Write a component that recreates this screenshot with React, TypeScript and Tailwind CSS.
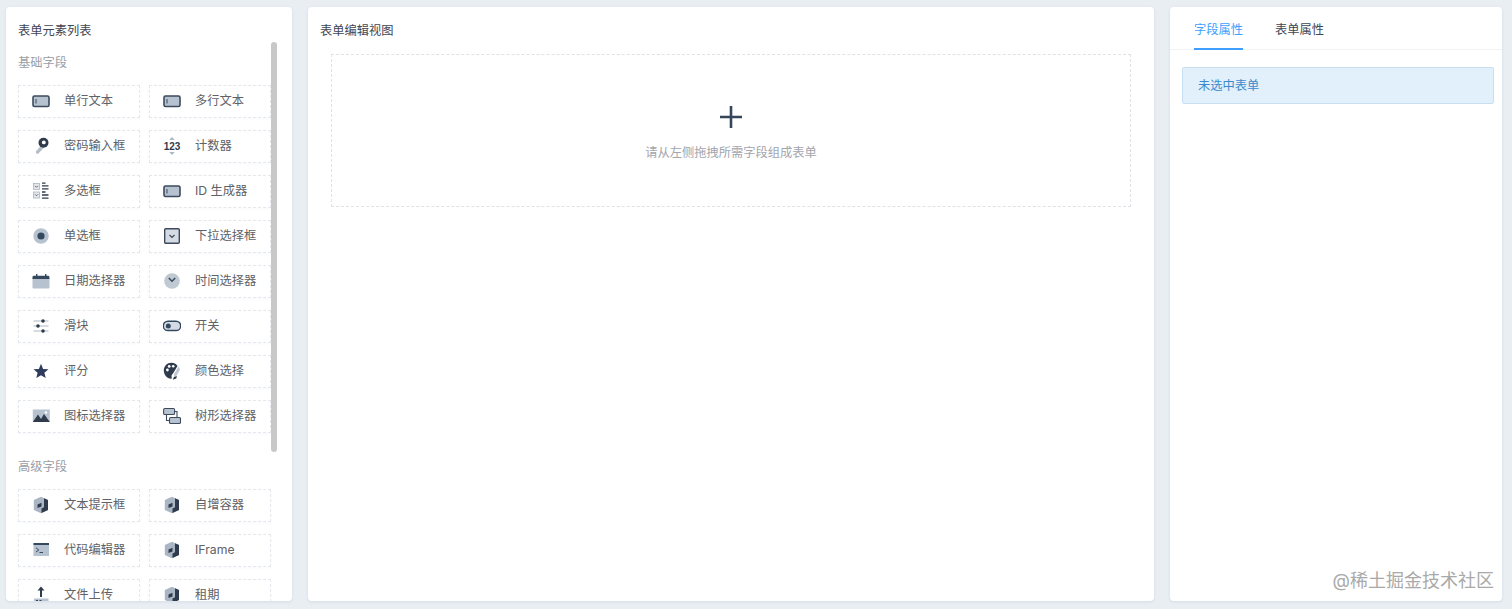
import React from "react";

const D = "#3d4a5c";
const L = "#b7c2d0";

const Svg = ({ children }: { children: React.ReactNode }) => (
  <svg viewBox="0 0 18 18" className="w-[18px] h-[18px] shrink-0">{children}</svg>
);

const InputIcon = () => (
  <Svg>
    <rect x="1" y="4" width="16" height="10.5" rx="1.5" fill={L} stroke={D} strokeWidth="1.6" />
    <rect x="3.5" y="7" width="1" height="4.5" fill={D} />
  </Svg>
);
const KeyIcon = () => (
  <Svg>
    <path d="M9.5 8 L3.8 14.5 L4.5 17 L6.5 16.5 L12 10.5" fill="#b4bdc8" />
    <circle cx="11.5" cy="5.8" r="5" fill="#2f3b4c" />
    <circle cx="11.8" cy="5.4" r="1.9" fill="#fff" />
  </Svg>
);
const CounterIcon = () => (
  <Svg>
    <path d="M9 0 L11.8 3 H6.2 Z M9 18 L11.8 15 H6.2 Z" fill="#aeb8c4" />
    <text x="9" y="12.8" textAnchor="middle" fontSize="10" fontWeight="700" fill="#2f3b4c" fontFamily="'Liberation Sans', sans-serif">123</text>
  </Svg>
);
const CheckListIcon = () => (
  <Svg>
    <rect x="1.5" y="1.5" width="6" height="6" fill="#e4e8ed" stroke="#aab4c0" strokeWidth="0.8" />
    <rect x="1.5" y="10" width="6" height="6" fill="#e4e8ed" stroke="#aab4c0" strokeWidth="0.8" />
    <path d="M3 3.8 L4.5 5.3 L6 3.8 M3 12.3 L4.5 13.8 L6 12.3" stroke={D} strokeWidth="0.8" fill="none" />
    <path d="M10 1.2h3.5M10 3.9h6.5M10 6.8h6.5M10 10h3.5M10 13h6.5M10 16.2h6.5" stroke="#2f3b4c" strokeWidth="1.3" />
  </Svg>
);
const RadioIcon = () => (
  <Svg>
    <circle cx="9" cy="9" r="7.7" fill={L} />
    <circle cx="9" cy="9" r="3.6" fill="#34495e" />
  </Svg>
);
const SelectIcon = () => (
  <Svg>
    <rect x="1.7" y="1.7" width="14.6" height="14.6" rx="1" fill="#d4dbe4" stroke={D} strokeWidth="1.4" />
    <path d="M6.5 8 L9 10.5 L11.5 8" stroke={D} strokeWidth="1.2" fill="none" />
  </Svg>
);
const DateIcon = () => (
  <Svg>
    <rect x="0.5" y="5" width="17" height="11.5" rx="1" fill={L} />
    <path d="M0.5 5.2 a1.4 1.4 0 0 1 1.4-1.4 H16 a1.4 1.4 0 0 1 1.4 1.4 V7 H0.5 Z" fill="#34495e" />
    <rect x="4" y="2" width="1.4" height="3" fill="#34495e" />
    <rect x="13" y="2" width="1.4" height="3" fill="#34495e" />
  </Svg>
);
const TimeIcon = () => (
  <Svg>
    <circle cx="9" cy="9" r="7.8" fill="#c0c8d1" />
    <path d="M5.8 6 L9 9.2 L12.2 6" stroke="#34495e" strokeWidth="1.5" fill="none" />
  </Svg>
);
const SliderIcon = () => (
  <Svg>
    <path d="M1.5 4h15M1.5 9h15M1.5 14h15" stroke="#aeb8c4" strokeWidth="1" />
    <circle cx="11" cy="4" r="1.8" fill="#2f3b4c" />
    <circle cx="6" cy="9" r="1.8" fill="#2f3b4c" />
    <circle cx="11" cy="14" r="1.8" fill="#2f3b4c" />
  </Svg>
);
const SwitchIcon = () => (
  <Svg>
    <rect x="0.3" y="4.2" width="17.4" height="9.4" rx="4.7" fill="#d4dbe4" stroke="#34495e" strokeWidth="1.5" />
    <circle cx="5.3" cy="8.9" r="2.5" fill="#34495e" />
  </Svg>
);
const StarIcon = () => (
  <Svg>
    <path d="M9 1.8 L11.1 6.9 L16.5 7.3 L12.4 10.8 L13.7 16.1 L9 13.2 L4.3 16.1 L5.6 10.8 L1.5 7.3 L6.9 6.9 Z" fill="#2f3b5c" />
  </Svg>
);
const PaletteIcon = () => (
  <Svg>
    <path d="M8.5 0.8 C4 0.8 0.8 4.2 0.8 8.5 C0.8 12.8 4.2 16.8 8 16.8 C8.8 16.8 9 16 8.6 15 C8.4 13.5 8.8 12.5 10 11.5 L14.5 4 C13 2 11 0.8 8.5 0.8 Z" fill="#2f3b4c" />
    <circle cx="4.4" cy="8" r="1.4" fill="#fff" />
    <circle cx="6.2" cy="4.4" r="1.4" fill="#fff" />
    <circle cx="10.2" cy="4.2" r="1.3" fill="#fff" />
    <path d="M15.5 4.5 L10.5 13 L13 14.8 L17.2 7.5 Z" fill="#c2c9d2" />
    <path d="M11 14.8 L9.8 17.8 L13.2 16.6 L14 14.2 Z" fill="#2f3b4c" />
  </Svg>
);
const ImageIcon = () => (
  <Svg>
    <rect x="0.8" y="2.5" width="17" height="12.5" fill={L} />
    <path d="M0.8 15 L6 7.5 L9 12 L12 7 L17.8 15 Z" fill="#2f3b4c" />
    <circle cx="14" cy="5.5" r="1.2" fill="#fff" />
  </Svg>
);
const TreeIcon = () => (
  <Svg>
    <rect x="0.6" y="1.5" width="11" height="6" rx="1.3" fill={L} stroke={D} strokeWidth="1.1" />
    <rect x="6.5" y="10.5" width="11" height="6" rx="1.3" fill={L} stroke={D} strokeWidth="1.1" />
    <path d="M11.6 4.5 H14 V10.5" stroke={D} strokeWidth="1.1" fill="none" />
    <path d="M3.5 7.5 V13.5 H6.5" stroke={D} strokeWidth="1.1" fill="none" />
  </Svg>
);
const BoxIcon = () => (
  <Svg>
    <path d="M9 0.8 L16 4 V14 L9 17.2 L1.8 14 V4 Z" fill="#aab6c4" />
    <path d="M12 2.2 L16 4 V14 L9.5 17 V12.5 L12 11.2 Z" fill="#2f3b4c" />
    <path d="M5.5 8.5 L9.5 6.8 V10.5 L5.5 12 Z" fill="#2f3b4c" />
  </Svg>
);
const CodeIcon = () => (
  <Svg>
    <rect x="1.5" y="2" width="15.5" height="13" fill={L} />
    <rect x="1.5" y="2" width="15.5" height="2" fill="#34495e" />
    <path d="M4 6.8 L6.8 9 L4 11 M7.5 11.5 H11" stroke="#3d4a5c" strokeWidth="1" fill="none" />
  </Svg>
);
const UploadIcon = () => (
  <Svg>
    <path d="M9 0.5 L12.5 4.5 H10 V11 H8 V4.5 H5.5 Z" fill="#2f3b4c" />
    <rect x="2" y="12.5" width="14.5" height="5.5" fill={L} />
    <rect x="4" y="14" width="2" height="2" fill="#34495e" />
    <rect x="7.5" y="14" width="2" height="2" fill="#34495e" />
  </Svg>
);

const Item = ({ icon, label }: { icon: React.ReactNode; label: string }) => (
  <div className="h-[33px] border border-dashed border-[#e4e7eb] flex items-center pl-[13px] pb-[2px] gap-[14px] text-[12.25px] text-[#606266] shadow-[0_1px_3px_rgba(120,140,170,0.05)]">
    {icon}
    <span className="whitespace-nowrap pt-[2px]">{label}</span>
  </div>
);

const basic: [React.ReactNode, string][] = [
  [<InputIcon />, "单行文本"],
  [<InputIcon />, "多行文本"],
  [<KeyIcon />, "密码输入框"],
  [<CounterIcon />, "计数器"],
  [<CheckListIcon />, "多选框"],
  [<InputIcon />, "ID 生成器"],
  [<RadioIcon />, "单选框"],
  [<SelectIcon />, "下拉选择框"],
  [<DateIcon />, "日期选择器"],
  [<TimeIcon />, "时间选择器"],
  [<SliderIcon />, "滑块"],
  [<SwitchIcon />, "开关"],
  [<StarIcon />, "评分"],
  [<PaletteIcon />, "颜色选择"],
  [<ImageIcon />, "图标选择器"],
  [<TreeIcon />, "树形选择器"],
];

const advanced: [React.ReactNode, string][] = [
  [<BoxIcon />, "文本提示框"],
  [<BoxIcon />, "自增容器"],
  [<CodeIcon />, "代码编辑器"],
  [<BoxIcon />, "IFrame"],
  [<UploadIcon />, "文件上传"],
  [<BoxIcon />, "租期"],
];

const Grid = ({ items }: { items: [React.ReactNode, string][] }) => (
  <div className="grid grid-cols-[122px_122px] gap-x-[9px] gap-y-[12px]">
    {items.map(([icon, label]) => (
      <Item key={label} icon={icon} label={label} />
    ))}
  </div>
);

const panel = "h-[594px] bg-white rounded-[4px] shadow-[0_1px_3px_rgba(120,140,170,0.18)] overflow-hidden relative";

export default function App() {
  return (
    <div
      className="h-[609px] w-[1512px] overflow-hidden bg-[#e9eef3] flex gap-4 pl-[6px] pt-[7px]"
      style={{ fontFamily: "Inter, 'Noto Sans CJK SC', 'Noto Sans', sans-serif" }}
    >
      <aside className={`${panel} w-[286px] pl-3`}>
        <h2 className="text-[12.25px] leading-[18px] text-[#3f4654] font-normal mt-[15px]">表单元素列表</h2>
        <h3 className="text-[12.25px] leading-[18px] text-[#9a9ea6] font-normal mt-[14px] mb-[13px]">基础字段</h3>
        <Grid items={basic} />
        <h3 className="text-[12.25px] leading-[18px] text-[#9a9ea6] font-normal mt-[25px] mb-[13px]">高级字段</h3>
        <Grid items={advanced} />
        <div className="absolute left-[265px] top-[35px] w-[6px] h-[410px] rounded-[3px] bg-[#c8c8c8]" />
      </aside>

      <main className={`${panel} w-[846px] pl-3`}>
        <h2 className="text-[12.25px] leading-[18px] text-[#3f4654] font-normal mt-[15px]">表单编辑视图</h2>
        <div className="mt-[14px] ml-[11px] w-[800px] h-[153px] border border-dashed border-[#dfe2e7] flex flex-col items-center pt-[50px]">
          <svg viewBox="0 0 24 24" className="w-6 h-6">
            <path d="M1 12 H23 M12 1 V23" stroke="#34465a" strokeWidth="2.6" fill="none" />
          </svg>
          <p className="mt-[15px] text-[12.25px] leading-[18px] text-[#a2a5ad]">请从左侧拖拽所需字段组成表单</p>
        </div>
      </main>

      <aside className={`${panel} w-[332px]`}>
        <div className="h-[43px] border-b border-[#f1f3f6] flex pl-[24px] gap-[32px] text-[12.25px]">
          <div className="h-[43px] border-b-2 border-[#409eff] text-[#409eff] pt-[14px] leading-[18px]">字段属性</div>
          <div className="text-[#3f4654] pt-[14px] leading-[18px]">表单属性</div>
        </div>
        <div className="mt-[17px] ml-3 mr-2 h-[37px] rounded-[2px] border border-[#c7dff2] bg-[#e1f0fa] flex items-center pl-[15px] pt-[2px] text-[12.25px] text-[#3b8bcc]">
          未选中表单
        </div>
        <div className="absolute right-[8px] bottom-[8px] text-[18px] leading-[24px] text-[#a9a9a9] whitespace-nowrap">@稀土掘金技术社区</div>
      </aside>
    </div>
  );
}
